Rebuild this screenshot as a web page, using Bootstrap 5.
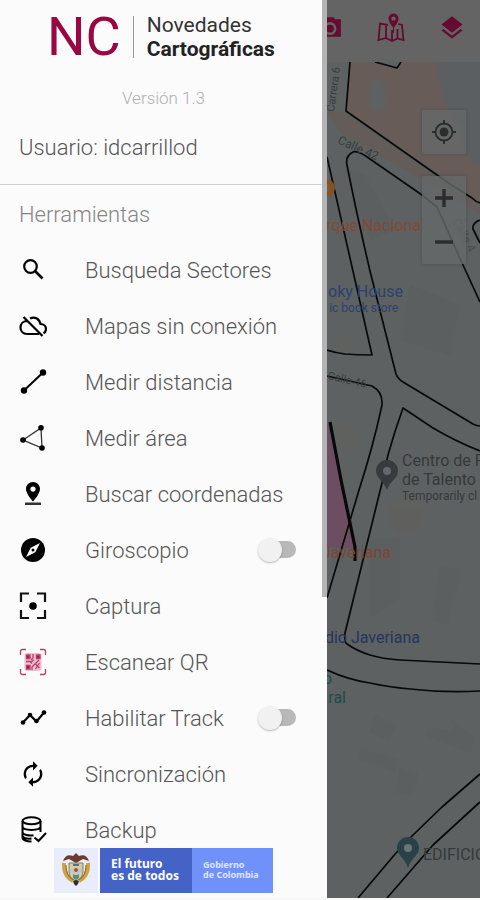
<!DOCTYPE html>
<html lang="es">
<head>
<meta charset="utf-8">
<meta name="viewport" content="width=device-width, initial-scale=1">
<title>Novedades Cartográficas</title>
<link rel="stylesheet" href="https://cdn.jsdelivr.net/npm/bootstrap@5.3.0/dist/css/bootstrap.min.css">
<style>
  body { font-family: Roboto, "Liberation Sans", sans-serif; background: #f7f8f8; }
  .app-shell { display: grid; grid-template-columns: 327fr 153fr; height: 100vh; padding-bottom: 2px; }
  .drawer { background: #fbfbfb; color: #555; font-weight: 300; min-width: 0; }
  .drawer-thumb { position: absolute; top: 0; right: 0; width: 5px; height: 66.5%; background: #b4b4b4; z-index: 2; }

  .brand { padding: 13px 0 0 47px; height: 61px; }
  .brand-mark { font-size: 54px; line-height: 48px; font-weight: 400; color: #990742; }
  .brand-rule { width: 1px; height: 42px; background: #999; margin: 0 13px 0 12px; }
  .brand-name { font-size: 21px; line-height: 24px; font-weight: 400; color: #333; }
  .brand-name strong { font-weight: 700; color: #222; }
  .version { font-size: 17px; line-height: 24px; color: #b0b0b0; margin-top: 25px; }
  .user-line { font-size: 22px; line-height: 28px; padding: 0 19px; margin: 24px 0 22px; }
  .drawer-rule { border-top: 1px solid #cfd1d0; }
  .section-title { font-size: 22px; line-height: 28px; padding: 0 19px; margin: 16px 0 14px; font-weight: 300; color: #858585; }

  .tool-list, .map-area { min-height: 0; }
  .tool-row { height: 56px; padding: 0 31px 0 19px; font-size: 22px; line-height: 28px; color: #555; font-weight: 300; }
  .tool-row svg { width: 28px; height: 28px; margin: 0 38px 2px 0; flex: none; color: #000; }
  .form-check-input.toggle { position: relative; width: 38px; height: 24px; margin: 0 0 2px; border: 0; border-radius: 12px; background: none; }
  .toggle::before { content: ""; position: absolute; left: 6px; right: 0; top: 3px; height: 17px; border-radius: 9px; background: #b8b8b8; }
  .toggle::after { content: ""; position: absolute; left: 0; top: 0; width: 24px; height: 24px; border-radius: 50%; background: #f1f1f1; box-shadow: 0 1px 2px #0004; }
  .toggle:checked::after { left: auto; right: 0; }

  .gov { display: grid; grid-template-columns: 46fr 92fr 81fr; height: 46px; width: 67%; margin: 0 auto 5px; color: #fff; }
  .gov > div { min-width: 0; }
  .gov-arms { background: #e9edfb; margin-right: 2px; }
  .gov-motto { background: #4562c6; font: 700 12px/12px "Noto Sans", sans-serif; padding-left: 11px; white-space: nowrap; }
  .gov-name { background: #7090fa; font: 700 9px/10px "Noto Sans", sans-serif; padding-left: 11px; color: #dfe7ff; white-space: nowrap; }

  .map-side { background: #5d6161; min-width: 0; }
  .map-bar { height: 62px; background: #646464; padding-bottom: 6px; gap: 5px; color: #650a30; flex: none; }
  .bar-btn { width: 56px; height: 56px; color: inherit; border: 0; }
  .map-svg { width: 100%; height: 100%; font-family: Roboto, sans-serif; }
  .map-tools { position: absolute; top: 48px; right: 14px; gap: 22px; }
  .map-btn { width: 44px; height: 44px; background: #656868d0; color: #2b2d2d; border: 0; border-radius: 2px; }
  .map-tool-box { box-shadow: 0 0 3px #3336; border-radius: 2px; }
</style>
<script src="https://cdn.jsdelivr.net/npm/bootstrap@5.3.0/dist/js/bootstrap.bundle.min.js"></script>
</head>
<body>
<div class="app-shell overflow-hidden">
  <aside class="drawer position-relative d-flex flex-column overflow-hidden">
    <div class="drawer-thumb"></div>
    <header>
      <div class="brand d-flex align-items-center">
        <span class="brand-mark">NC</span>
        <span class="brand-rule"></span>
        <span class="brand-name">Novedades<br><strong>Cartográficas</strong></span>
      </div>
      <p class="version text-center mb-0">Versión 1.3</p>
      <p class="user-line">Usuario: idcarrillod</p>
    </header>
    <div class="drawer-rule"></div>
    <h2 class="section-title">Herramientas</h2>
    <nav class="tool-list flex-grow-1 overflow-hidden" aria-label="Herramientas">
      <button type="button" class="tool-row btn rounded-0 border-0 w-100 d-flex align-items-center text-start">
        <svg viewBox="0 0 28 28" fill="none" stroke="currentColor" stroke-width="2.2"><circle cx="11.5" cy="10.5" r="6.3"/><path d="M16 15l7.5 7.5" stroke-width="2.6"/></svg>Busqueda Sectores</button>
      <button type="button" class="tool-row btn rounded-0 border-0 w-100 d-flex align-items-center text-start">
        <svg viewBox="0 0 28 28" fill="none" stroke="currentColor" stroke-width="2.2"><path d="M8.500 9C4 9 1.500 12 1.500 15.500S4 22 8 22h12M11 6.500c5-2.500 9.500.500 10.500 5.500 3.500 0 5.500 2.500 5.500 5 0 2-1 3.500-2.500 4.300M4.500 5L23.500 24"/></svg>Mapas sin conexión</button>
      <button type="button" class="tool-row btn rounded-0 border-0 w-100 d-flex align-items-center text-start">
        <svg viewBox="0 0 28 28" fill="currentColor"><path d="M5 22.500L24 4.500" stroke="currentColor" stroke-width="2"/><circle cx="5" cy="22.5" r="3.2"/><circle cx="24" cy="4.5" r="3.2"/></svg>Medir distancia</button>
      <button type="button" class="tool-row btn rounded-0 border-0 w-100 d-flex align-items-center text-start">
        <svg viewBox="0 0 28 28" fill="currentColor"><path d="M4 16L22 4l1 20z" fill="none" stroke="#333" stroke-width="1.3"/><circle cx="4" cy="16" r="2.8"/><circle cx="22" cy="3.8" r="2.8"/><circle cx="23" cy="24" r="2.8"/></svg>Medir área</button>
      <button type="button" class="tool-row btn rounded-0 border-0 w-100 d-flex align-items-center text-start">
        <svg viewBox="0 0 28 28" fill="currentColor"><path fill-rule="evenodd" d="M14 2c-4 0-7 3-7 7 0 5 7 12.500 7 12.500S21 14 21 9c0-4-3-7-7-7zm0 4.500a2.600 2.600 0 110 5.200 2.600 2.600 0 010-5.200z"/><path d="M6 22.500h16V25H6z" fill="#333"/></svg>Buscar coordenadas</button>
      <div class="tool-row d-flex align-items-center">
        <svg viewBox="0 0 28 28"><circle cx="14" cy="14" r="12" fill="#000"/><path fill="#fff" fill-rule="evenodd" d="M21 7l-4.700 9.300L7 21l4.700-9.300zM14 12.500a1.500 1.500 0 100 3 1.500 1.500 0 000-3z"/></svg>
        <label for="gyro" class="flex-grow-1">Giroscopio</label>
        <input id="gyro" class="form-check-input toggle" type="checkbox" role="switch">
      </div>
      <button type="button" class="tool-row btn rounded-0 border-0 w-100 d-flex align-items-center text-start">
        <svg viewBox="0 0 28 28"><path d="M2 10V1.500h8M18 1.500h8V10M26 18v8h-8M10 26H2v-8" fill="none" stroke="#111" stroke-width="2.200"/><circle cx="14" cy="14" r="3.8"/></svg>Captura</button>
      <button type="button" class="tool-row btn rounded-0 border-0 w-100 d-flex align-items-center text-start">
        <svg viewBox="0 0 28 28" fill="none" stroke="#b54068" stroke-width="1.300"><path d="M1.500 7V3.500q0-2 2-2H7M21 1.500h3.500q2 0 2 2V7M26.500 21v3.500q0 2-2 2H21M7 26.500H3.500q-2 0-2-2V21"/><rect x="5.500" y="5" width="17" height="18" rx="3" fill="#edbdd0" stroke="none"/><path d="M7.500 7h3.500v3.500H7.500zM17.500 7H21v3.500h-3.500zM7.500 17.500h3.500V21H7.500zM14 6v4l-2 2M7 13.500h4l2 2M20 12l-7 7v3M12 14l3-2M16.500 16l4 4M20.500 15l-4 6"/><path d="M8 7.500h2.500V10H8zM18 7.500h2.500V10H18zM8 18h2.500v2.500H8z" fill="#a01c52" stroke="none"/></svg>Escanear QR</button>
      <div class="tool-row d-flex align-items-center">
        <svg viewBox="0 0 28 28" fill="currentColor"><path d="M4 18.500l7-7.500 6.500 6.500L25 8.500" fill="none" stroke="currentColor" stroke-width="2.200"/><circle cx="4" cy="18.5" r="2.3"/><circle cx="11" cy="11" r="2.3"/><circle cx="17.5" cy="17" r="2.3"/><circle cx="25" cy="8.5" r="2.3"/></svg>
        <label for="track" class="flex-grow-1">Habilitar Track</label>
        <input id="track" class="form-check-input toggle" type="checkbox" role="switch">
      </div>
      <button type="button" class="tool-row btn rounded-0 border-0 w-100 d-flex align-items-center text-start">
        <svg viewBox="0 0 24 24" fill="currentColor"><path d="M12 6v3l4-4-4-4v3c-4.420 0-8 3.580-8 8 0 1.570.460 3.030 1.240 4.260L6.700 14.800c-.450-.830-.700-1.790-.700-2.800 0-3.310 2.690-6 6-6zm6.760 1.740L17.300 9.200c.440.840.700 1.790.700 2.800 0 3.310-2.690 6-6 6v-3l-4 4 4 4v-3c4.420 0 8-3.580 8-8 0-1.570-.460-3.030-1.240-4.260z"/></svg>Sincronización</button>
      <button type="button" class="tool-row btn rounded-0 border-0 w-100 d-flex align-items-center text-start">
        <svg viewBox="0 0 28 28" fill="none" stroke="currentColor" stroke-width="2"><ellipse cx="12.5" cy="4.8" rx="9" ry="3.5"/><path d="M3.500 5v17c0 2 4 3.500 9 3.500M21.500 5v11M3.500 10.500c0 4.500 18 4.500 18 0M3.500 16c0 3 7 4 11 3.300M3.500 20.500q3 3 9 2M15.500 21.500l4 3.500 7.500-8"/></svg>Backup</button>
    </nav>
    <footer class="gov">
      <div class="gov-arms d-flex align-items-center justify-content-center">
        <svg width="30" height="36" viewBox="0 0 30 36" role="img" aria-label="Escudo de Colombia">
          <path d="M2 9Q5 1 12 4L15 1l3 3q7-3 10 5l-6-2-7 4-7-4z" fill="#6b3b31"/>
          <path d="M3 11q-1 13 9 18M27 11q1 13-9 18" fill="none" stroke="#c9a83b" stroke-width="4"/>
          <path d="M5 13q0 11 7 15M25 13q0 11-7 15" fill="none" stroke="#a94b3e" stroke-width="1"/>
          <path d="M8 11h14v9q0 6-7 9-7-3-7-9z" fill="#d8cd9b" stroke="#7d8050"/>
          <path d="M9 17h12v4H9z" fill="#b8c6dc"/><path d="M12 22q3 2 6 0v4l-3 2-3-2z" fill="#5d8d79"/>
          <circle cx="15" cy="18" r="2" fill="#bf4644"/><path d="M12 13h6" stroke="#4f6f9f" stroke-width="2"/>
          <path d="M12 29l3-1 3 1-1 3-2 2-2-2z" fill="#352b27"/>
        </svg>
      </div>
      <div class="gov-motto d-flex flex-column justify-content-center"><span>El futuro</span><span>es de todos</span></div>
      <div class="gov-name d-flex flex-column justify-content-center"><span>Gobierno</span><span>de Colombia</span></div>
    </footer>
  </aside>

  <main class="map-side d-flex flex-column overflow-hidden">
    <div class="map-bar d-flex justify-content-end overflow-hidden">
      <button type="button" class="bar-btn btn p-0 flex-shrink-0" aria-label="Cámara"><svg width="26" height="26" viewBox="0 0 24 24" fill="currentColor"><path fill-rule="evenodd" d="M9 2L7.200 4H4a2 2 0 00-2 2v14h20V4h-5.200L15 2zm3 4.500a6 6 0 110 12 6 6 0 010-12z"/><circle cx="12" cy="12.5" r="3.6"/></svg></button>
      <button type="button" class="bar-btn btn p-0 flex-shrink-0" aria-label="Mapa"><svg width="28" height="32" viewBox="0 0 28 32"><path d="M11 13L3 11.500 1.500 28 9 26l6 3 5.500-2.500 6 1.500L25 13l-4-1M9 14v12M15 18v10M20.500 17v9" fill="none" stroke="currentColor" stroke-width="1.800"/><path d="M16.500 8v13" stroke="currentColor" stroke-width="1"/><path fill="currentColor" fill-rule="evenodd" d="M16.500 1.500a5 5 0 00-5 5c0 4 5 9.500 5 9.500s5-5.500 5-9.500a5 5 0 00-5-5zm0 3a2.200 2.200 0 110 4.400 2.200 2.200 0 010-4.400z"/></svg></button>
      <button type="button" class="bar-btn btn p-0 flex-shrink-0" aria-label="Capas"><svg width="28" height="28" viewBox="0 0 24 24" fill="currentColor"><path d="M12 18.540l-7.370-5.730L3 14.070l9 7 9-7-1.630-1.270zM12 16l7.360-5.730L21 9l-9-7-9 7 1.630 1.270z"/></svg></button>
    </div>
    <div class="map-area position-relative flex-grow-1 overflow-hidden">
      <svg class="map-svg d-block" viewBox="327 62 153 836" preserveAspectRatio="xMinYMin slice" role="img" aria-label="Mapa de calles">
        <path d="M327 62h153v836H327z" fill="#5d6161"/>
        <path d="M350 62h130v140L436 172 346 111z" fill="#675c58"/>
        <path d="M327 111l19 2 92 64 42 27v9L422 180l-82-48-13-22z" fill="#645c59"/>
        <path d="M437 62h43v105q-18-6-18-40-20-14-25-65z" fill="#5c5f62"/>
        <path d="M369 80q14-4 16 9v18q-8 8-16 0z" fill="#5f6061"/>
        <path d="M375 62l22 6 4-6z" fill="#5d6161"/>
        <g fill="#595d60" opacity=".5"><path d="M345 170l20 5 30 55-25 10zM410 285l50 20-10 50-50-15zM440 565l22 5-15 55-15-5zM370 540l30-2v60l-30 20zM375 715l22 10-8 15-20-8zM360 748l38 12-2 12-38-12zM400 768l18 6-6 22-18-4zM450 718l25 20-5 15-45-18 5-8 25 5z"/></g>
        <g fill="#64615b" opacity=".3"><circle cx="405" cy="515" r="18"/><circle cx="344" cy="342" r="10"/><circle cx="345" cy="435" r="13"/></g>
        <path d="M327 424h3l25 125-28-2z" fill="#6d4d62"/>
        <g fill="none" stroke="#080909" stroke-width="1.7" stroke-linejoin="round">
          <path d="M350 62l-4 49 91 64 13 9 22 14q4 4 8 5M375 62l22 6 4-6"/>
          <path d="M327 157q14 62 28 123l17 75q-15 0-27-1-9-1-18-4"/>
          <path d="M480 302L463 265l-26-58-15-12-52-36q-12-9-17-7-8 4-6 13 9 46 23 106l26 103q2 5 7 8l70 42q4 2 7 2"/>
          <path d="M480 220q-8 3-7 9l7 14M327 376l45 10q11 6 10 19-9 42-23 85l-32 108"/>
          <path d="M480 451q-25-10-47-23l-30-20q-8 22-15 47l-6 28-37 150q-1 9 2 11 10 7 23 11 13 4 30 5l80 4"/>
          <path d="M327 670q22 10 43 13 18 4 40 6 35 4 70 2M480 774l-38 33-30 29-16 17-38 45M480 802l-47 43-46 53"/>
          <path d="M330 422l11 58 14 67v14" stroke-width="3.2"/>
        </g>
        <g fill="#383c3e" font-size="12">
          <text transform="translate(337 143) rotate(24)">Calle 42</text>
          <text transform="translate(334 112) rotate(-82)" font-size="11">Carrera 6</text>
          <text transform="translate(327 379) rotate(13)" font-size="11">Calle 46</text>
          <text transform="translate(452 221) rotate(62)" fill="#484b4c">Calle 4</text>
        </g>
        <circle cx="326" cy="188" r="9" fill="#87501f"/><circle cx="326" cy="188" r="3.5" fill="#646361"/>
        <text x="421" y="231" text-anchor="end" font-size="16" fill="#824a35">rque Naciona</text>
        <text x="328" y="297" font-size="16" fill="#2b426f">oky House</text>
        <text x="398" y="312" text-anchor="end" font-size="12" fill="#2b426f">ic book store</text>
        <g fill="#35393c"><text x="402" y="466" font-size="16">Centro de F</text><text x="402" y="485" font-size="16">de Talento</text><text x="402" y="500" font-size="12">Temporarily cl</text><text x="423" y="860" font-size="16">EDIFICIO</text></g>
        <text x="391" y="558" text-anchor="end" font-size="16" fill="#7b4636">Javeriana</text>
        <text x="420" y="643" text-anchor="end" font-size="16" fill="#28345f">dio Javeriana</text>
        <g fill="#1c4d4c" font-size="16"><text x="332" y="684" text-anchor="end">o</text><text x="346" y="703" text-anchor="end">ral</text></g>
        <path d="M387 460a11 11 0 00-11 11c0 7 8 10 11 19 3-9 11-12 11-19a11 11 0 00-11-11z" fill="#373b3e"/><circle cx="387" cy="471" r="4" fill="#62696b"/>
        <path d="M408 837a11 11 0 00-11 11c0 7 8 10 11 20 3-10 11-13 11-20a11 11 0 00-11-11z" fill="#294247"/><circle cx="408" cy="848" r="4" fill="#687578"/>
      </svg>
      <div class="map-tools d-flex flex-column">
        <div class="map-tool-box"><button type="button" class="map-btn btn p-0 d-flex align-items-center justify-content-center" aria-label="Mi ubicación"><svg width="26" height="26" viewBox="0 0 26 26" fill="none" stroke="currentColor" stroke-width="1.8"><circle cx="13" cy="13" r="8.5"/><circle cx="13" cy="13" r="4.5" fill="currentColor" stroke="none"/><path d="M13 1v4M13 21v4M1 13h4M21 13h4"/></svg></button></div>
        <div class="map-tool-box">
          <button type="button" class="map-btn btn p-0 d-flex align-items-center justify-content-center" aria-label="Acercar"><svg width="20" height="20" viewBox="0 0 20 20" stroke="currentColor" stroke-width="3.4"><path d="M1 10h18M10 1v18"/></svg></button>
          <button type="button" class="map-btn btn p-0 d-flex align-items-center justify-content-center" aria-label="Alejar"><svg width="20" height="20" viewBox="0 0 20 20" stroke="currentColor" stroke-width="3.4"><path d="M1 10h18"/></svg></button>
        </div>
      </div>
    </div>
  </main>
</div>
</body>
</html>
